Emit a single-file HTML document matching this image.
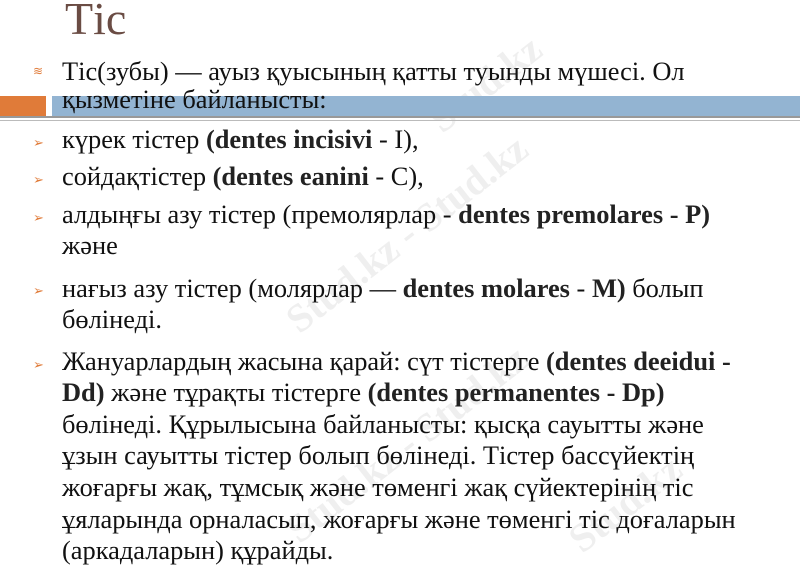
<!DOCTYPE html>
<html><head><meta charset="utf-8"><style>
body{margin:0;width:800px;height:569px;overflow:hidden;background:#fff;position:relative;font-family:"Liberation Serif",serif;}
.t{position:absolute;left:62px;font-size:26.4px;color:#111;white-space:nowrap;line-height:30px;}
.b{position:absolute;left:33px;color:#e07b39;font-size:13px;}
.wm{position:absolute;color:#efefef;font-family:"Liberation Serif",serif;font-weight:bold;font-size:40px;transform:rotate(-38deg);white-space:nowrap;}
b{color:#222}
</style></head><body>
<div class="wm" style="left:420px;top:60px">Stud.kz</div>
<div class="wm" style="left:260px;top:210px">Stud.kz - Stud.kz</div>
<div class="wm" style="left:260px;top:420px">Stud.kz - Stud.kz</div>
<div class="wm" style="left:560px;top:480px">Stud.kz</div>
<div style="position:absolute;left:65px;top:-8px;font-size:46px;color:#6a4c44;">Тіс</div>
<div style="position:absolute;left:0;top:96px;width:46px;height:20px;background:#e07b39"></div>
<div style="position:absolute;left:52px;top:96px;width:748px;height:20px;background:#93b4d2"></div>
<div style="position:absolute;left:0;top:116px;width:800px;height:2px;background:#999"></div>
<div style="position:absolute;left:0;top:120px;width:800px;height:1px;background:#bbb"></div>
<div class="b" style="top:64px;font-size:12px">≋</div>
<div class="t" style="top:56px">Тіс(зубы) — ауыз қуысының қатты туынды мүшесі. Ол</div>
<div class="t" style="top:84px">қызметіне байланысты:</div>
<div class="b" style="top:135px">➢</div>
<div class="t" style="top:124px">күрек тістер <b>(dentes incisivi</b> - I),</div>
<div class="b" style="top:172px">➢</div>
<div class="t" style="top:161px">сойдақтістер <b>(dentes eanini</b> - С),</div>
<div class="b" style="top:210px">➢</div>
<div class="t" style="top:199px">алдыңғы азу тістер (премолярлар - <b>dentes premolares - P)</b></div>
<div class="t" style="top:230px">және</div>
<div class="b" style="top:283px">➢</div>
<div class="t" style="top:273px">нағыз азу тістер (молярлар — <b>dentes molares</b> - <b>M)</b> болып</div>
<div class="t" style="top:304px">бөлінеді.</div>
<div class="b" style="top:357px">➢</div>
<div class="t" style="top:346px">Жануарлардың жасына қарай: сүт тістерге <b>(dentes deeidui -</b></div>
<div class="t" style="top:377px"><b>Dd)</b> және тұрақты тістерге <b>(dentes permanentes - Dp)</b></div>
<div class="t" style="top:409px">бөлінеді. Құрылысына байланысты: қысқа сауытты және</div>
<div class="t" style="top:440px">ұзын сауытты тістер болып бөлінеді. Тістер бассүйектің</div>
<div class="t" style="top:472px">жоғарғы жақ, тұмсық және төменгі жақ сүйектерінің тіс</div>
<div class="t" style="top:504px">ұяларында орналасып, жоғарғы және төменгі тіс доғаларын</div>
<div class="t" style="top:535px">(аркадаларын) құрайды.</div>
</body></html>
